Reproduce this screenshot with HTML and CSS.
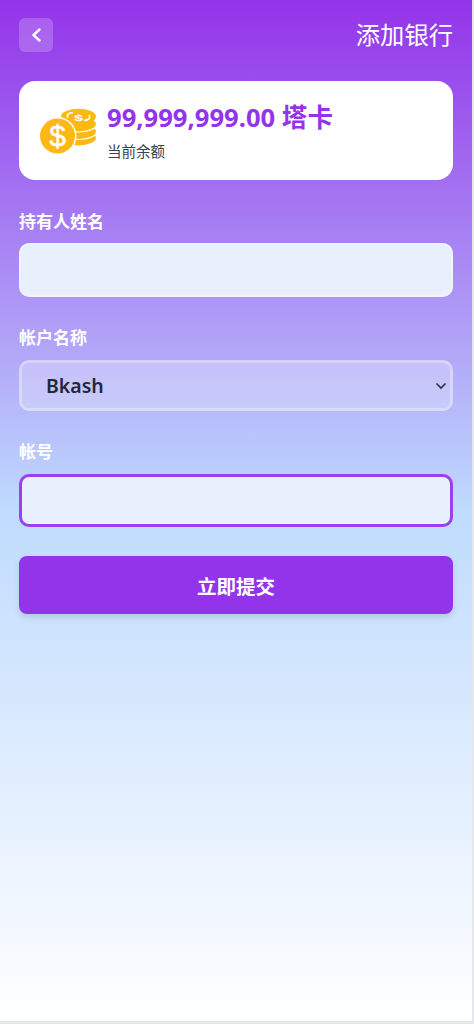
FILE: index.html
```html
<!DOCTYPE html>
<html lang="zh-CN">
<head>
<meta charset="utf-8">
<title>添加银行</title>
<link rel="stylesheet" href="styles.css">
</head>
<body>
<main class="page">
  <header class="topbar">
    <button class="back" type="button" aria-label="返回">
      <svg width="12" height="14" viewBox="0 0 12 14"><path d="M9.500 1.500 L3.500 7 L9.500 12.500" fill="none" stroke="#fff" stroke-width="2.400" stroke-linecap="round" stroke-linejoin="round"/></svg>
    </button>
    <h1 class="title">添加银行</h1>
  </header>
  <section class="balance">
    <svg class="coins" width="58" height="48" viewBox="0 0 58 48">
      <g fill="#fdb813" stroke="#fff" stroke-width="1.200">
        <ellipse cx="38.500" cy="31" rx="18" ry="8"/>
        <ellipse cx="38.500" cy="24.500" rx="18" ry="8"/>
        <ellipse cx="38.500" cy="17" rx="18" ry="8"/>
      </g>
      <ellipse cx="38.500" cy="9.500" rx="17.500" ry="7.800" fill="#fdb813"/>
      <text class="coin-small" text-anchor="middle" transform="translate(38.500 13.500) scale(1.500 0.800)">$</text>
      <path d="M28 11 C26 8 29 5.500 33 5.500 M49 8 C51 11 48 13.500 44 13.500" fill="none" stroke="#fff" stroke-width="1.500"/>
      <circle cx="17.500" cy="29" r="19" fill="#fff"/>
      <circle cx="17.500" cy="29" r="17.500" fill="#fdb813"/>
      <text x="17.500" y="39" class="coin-big" text-anchor="middle">$</text>
    </svg>
    <div class="balance-text">
      <div class="amount">99,999,999.00 塔卡</div>
      <div class="caption">当前余额</div>
    </div>
  </section>
  <form class="form">
    <div class="field first">
      <label class="label" for="holder">持有人姓名</label>
      <input class="input" id="holder" type="text">
    </div>
    <div class="field second">
      <label class="label" for="bank">帐户名称</label>
      <div class="select-wrap">
        <select class="select" id="bank"><option>Bkash</option></select>
        <svg class="chevron" width="12" height="8" viewBox="0 0 12 8"><path d="M1.500 1.500 L6 6 L10.500 1.500" fill="none" stroke="#2d3142" stroke-width="1.600"/></svg>
      </div>
    </div>
    <div class="field third">
      <label class="label" for="account">帐号</label>
      <input class="input focus" id="account" type="text">
    </div>
    <button class="submit" type="button">立即提交</button>
  </form>
</main>
</body>
</html>
```

FILE: styles.css
```css
* { box-sizing: border-box; }
html, body { margin: 0; padding: 0; }
body {
  background: #e5e7eb;
  font-family: "Noto Sans", "Noto Sans CJK SC", sans-serif;
  width: 474px;
  height: 1024px;
  overflow: hidden;
}
.page {
  width: 472px;
  height: 1021px;
  padding: 18px 19px 0;
  background: linear-gradient(to bottom, #9333ea 0%, #bfdbfe 50%, #ffffff 100%);
}
.topbar {
  display: flex;
  align-items: center;
  justify-content: space-between;
  height: 34px;
}
.back {
  width: 34px;
  height: 34px;
  padding: 0;
  border: 0;
  border-radius: 6px;
  background: rgba(255, 255, 255, 0.2);
  display: flex;
  align-items: center;
  justify-content: center;
}
.title {
  margin: 0;
  font-size: 24.300px;
  font-weight: 400;
  color: #fff;
  line-height: 34px;
}
.balance {
  margin-top: 29px;
  height: 99px;
  width: 434px;
  background: #fff;
  border-radius: 16px;
  display: flex;
  align-items: center;
  padding-left: 21px;
}
.coins { flex: none; margin-top: 1px; }
.coin-big { font: 400 30px "Liberation Sans", sans-serif; fill: #fff; stroke: #fff; stroke-width: 0.500; }
.coin-small { font: 700 11px "Liberation Sans", sans-serif; fill: #fff; }
.balance-text { margin-left: 9px; margin-top: 1px; }
.amount {
  font-size: 25.600px;
  font-weight: 700;
  line-height: 34px;
  color: #9333ea;
}
.caption {
  font-size: 14.500px;
  line-height: 20px;
  margin-top: 6px;
  color: #374151;
}
.form { display: block; width: 434px; }
.field { display: block; }
.first { margin-top: 30px; }
.second { margin-top: 29px; }
.third { margin-top: 29px; }
.label {
  display: block;
  font-size: 17px;
  font-weight: 700;
  line-height: 24px;
  color: #fff;
  margin-bottom: 9px;
}
.second .label, .third .label { margin-bottom: 10px; }
.input {
  display: block;
  width: 434px;
  height: 54px;
  border: 2px solid rgba(255, 255, 255, 0.3);
  border-radius: 10px;
  background: #e8f0fe;
  outline: none;
}
.focus { height: 53px; border: 3px solid #9a40ec; }
.select-wrap { position: relative; }
.select {
  display: block;
  appearance: none;
  width: 434px;
  height: 51px;
  padding: 0 0 0 24px;
  border: 3px solid rgba(255, 255, 255, 0.3);
  border-radius: 10px;
  background: rgba(255, 255, 255, 0.25);
  font-family: inherit;
  font-size: 19.500px;
  font-weight: 600;
  color: #1f2937;
}
.chevron { position: absolute; right: 6px; top: 22px; }
.submit {
  display: block;
  width: 434px;
  height: 58px;
  margin-top: 29px;
  border: 0;
  border-radius: 8px;
  background: #9333ea;
  color: #fff;
  font-family: inherit;
  font-size: 19.500px;
  font-weight: 700;
  box-shadow: 0 4px 6px rgba(0, 0, 0, 0.1);
}
```
